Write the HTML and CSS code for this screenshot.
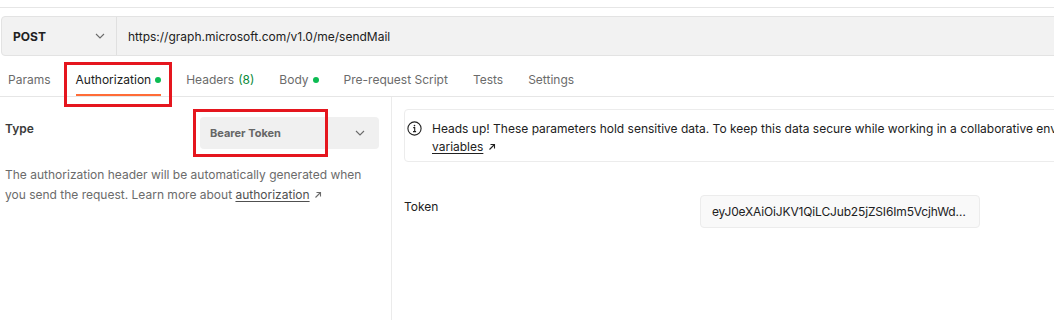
FILE: index.html
```html
<!DOCTYPE html>
<html>
<head>
<meta charset="utf-8">
<link rel="stylesheet" href="styles.css">
</head>
<body>
<div class="topline"></div>
<div class="urlbar">
  <div class="method">
    <span class="method-name">POST</span>
    <svg class="chev" width="10" height="6" viewBox="0 0 10 6"><path d="M1 1l4 4 4-4" fill="none" stroke="#6b6b6b" stroke-width="1.1"/></svg>
  </div>
  <div class="url">https://graph.microsoft.com/v1.0/me/sendMail</div>
</div>
<nav class="tabs">
  <span class="tab">Params</span>
  <span class="tab active">Authorization <i class="dot"></i></span>
  <span class="tab">Headers <span class="count">(8)</span></span>
  <span class="tab">Body <i class="dot"></i></span>
  <span class="tab">Pre-request Script</span>
  <span class="tab">Tests</span>
  <span class="tab">Settings</span>
</nav>
<main class="content">
  <section class="left">
    <div class="type-row">
      <span class="type-label">Type</span>
      <div class="select">
        <span>Bearer Token</span>
        <svg class="chev" width="10" height="6" viewBox="0 0 10 6"><path d="M1 1l4 4 4-4" fill="none" stroke="#6b6b6b" stroke-width="1.1"/></svg>
      </div>
    </div>
    <p class="desc">The authorization header will be automatically generated when you send the request. Learn more about <a class="link">authorization</a> <svg class="arrow" width="8" height="8" viewBox="0 0 8 8"><path d="M1.5 6.5l5-5M2.5 1.5h4v4" fill="none" stroke="#6b6b6b" stroke-width="1.1"/></svg></p>
  </section>
  <section class="right">
    <div class="notice">
      <svg class="info" width="15" height="15" viewBox="0 0 15 15"><circle cx="7.5" cy="7.5" r="6.6" fill="none" stroke="#212121" stroke-width="1.1"/><circle cx="7.5" cy="4.6" r="0.8" fill="#212121"/><path d="M6.2 6.6h1.5v4M6 10.6h3.1" fill="none" stroke="#212121" stroke-width="1.1"/></svg>
      <div class="notice-text">Heads up! These parameters hold sensitive data. To keep this data secure while working in a collaborative environment, we recommend using<br><a class="link dark">variables</a> <svg class="arrow" width="8" height="8" viewBox="0 0 8 8"><path d="M1.5 6.5l5-5M2.5 1.5h4v4" fill="none" stroke="#212121" stroke-width="1.1"/></svg></div>
    </div>
    <div class="token-row">
      <span class="token-label">Token</span>
      <div class="token-input">eyJ0eXAiOiJKV1QiLCJub25jZSI6Im5VcjhWdXlpQ2RkOVdvT0x1ZGZ</div>
    </div>
  </section>
</main>
<div class="mark mark-tab"></div>
<div class="mark mark-select"></div>
</body>
</html>
```
FILE: styles.css
```css
* { box-sizing: border-box; }
html, body { margin: 0; padding: 0; background: #fff; overflow: hidden; }
body {
  font-family: Inter, "Noto Sans", sans-serif;
  font-size: 12px;
  color: #212121;
  width: 1054px;
  height: 320px;
  position: relative;
}
.topline { height: 8px; border-bottom: 1px solid #e6e6e6; }
.urlbar {
  display: flex;
  margin: 8px -20px 0 1px;
  height: 40px;
  background: #f2f2f2;
  border: 1px solid #e3e3e3;
  border-radius: 4px;
}
.method {
  width: 115px;
  flex: none;
  display: flex;
  align-items: center;
  justify-content: space-between;
  padding: 0 11px 0 11px;
  border-right: 1px solid #e0e0e0;
}
.method-name { font-weight: 700; color: #212121; }
.url { display: flex; align-items: center; padding-left: 11px; color: #212121; }
.tabs {
  display: flex;
  gap: 25px;
  padding-left: 8px;
  height: 41px;
  border-bottom: 1px solid #e6e6e6;
}
.tab {
  padding-top: 16px;
  line-height: 16px;
  height: 40px;
  color: #6b6b6b;
  border-bottom: 2px solid transparent;
  display: flex;
  align-items: flex-start;
  gap: 4px;
  white-space: nowrap;
}
.tab.active { color: #212121; border-bottom-color: #ff6c37; }
.dot { display: inline-block; width: 6px; height: 6px; border-radius: 50%; background: #0cbb52; margin-top: 5px; }
.count { color: #0a8a3a; }
.content { display: grid; grid-template-columns: 392px 1fr; height: 224px; }
.left { border-right: 1px solid #ebebeb; padding: 20px 12px 0 5px; }
.type-row { display: flex; justify-content: space-between; align-items: flex-start; }
.type-label { font-weight: 600; color: #3a3a3a; margin-top: 4px; line-height: 16px; }
.select {
  width: 179px;
  height: 32px;
  background: #f0f0f0;
  border-radius: 4px;
  display: flex;
  align-items: center;
  justify-content: space-between;
  padding: 0 14px 0 10px;
  font-size: 11px;
  font-weight: 700;
  color: #666;
}
.desc { margin: 16px 0 0; line-height: 20px; color: #6b6b6b; }
.link { text-decoration: underline; color: #505050; text-underline-offset: 2px; }
.link.dark { color: #212121; }
.arrow { margin-left: 1px; vertical-align: 0; }
.right { padding: 12px 0 0 12px; }
.notice {
  display: flex;
  gap: 10px;
  width: 900px;
  height: 53px;
  border: 1px solid #ececec;
  border-radius: 4px;
  padding: 10px 0 0 2px;
  white-space: nowrap;
}
.info { flex: none; margin-top: 1px; }
.notice-text { line-height: 18px; color: #212121; }
.token-row { display: flex; margin-top: 33px; }
.token-label { width: 296px; margin-top: 4px; line-height: 16px; color: #212121; }
.token-input {
  width: 280px;
  height: 33px;
  background: #f9f9f9;
  border: 1px solid #ececec;
  border-radius: 4px;
  padding: 0 11px;
  line-height: 31px;
  letter-spacing: -0.15px;
  overflow: hidden;
  text-overflow: ellipsis;
  white-space: nowrap;
}
.mark { position: absolute; border: 3px solid #e5161e; }
.mark-tab { left: 64px; top: 62px; width: 108px; height: 45px; }
.mark-select { left: 193px; top: 109px; width: 135px; height: 48px; }
```
